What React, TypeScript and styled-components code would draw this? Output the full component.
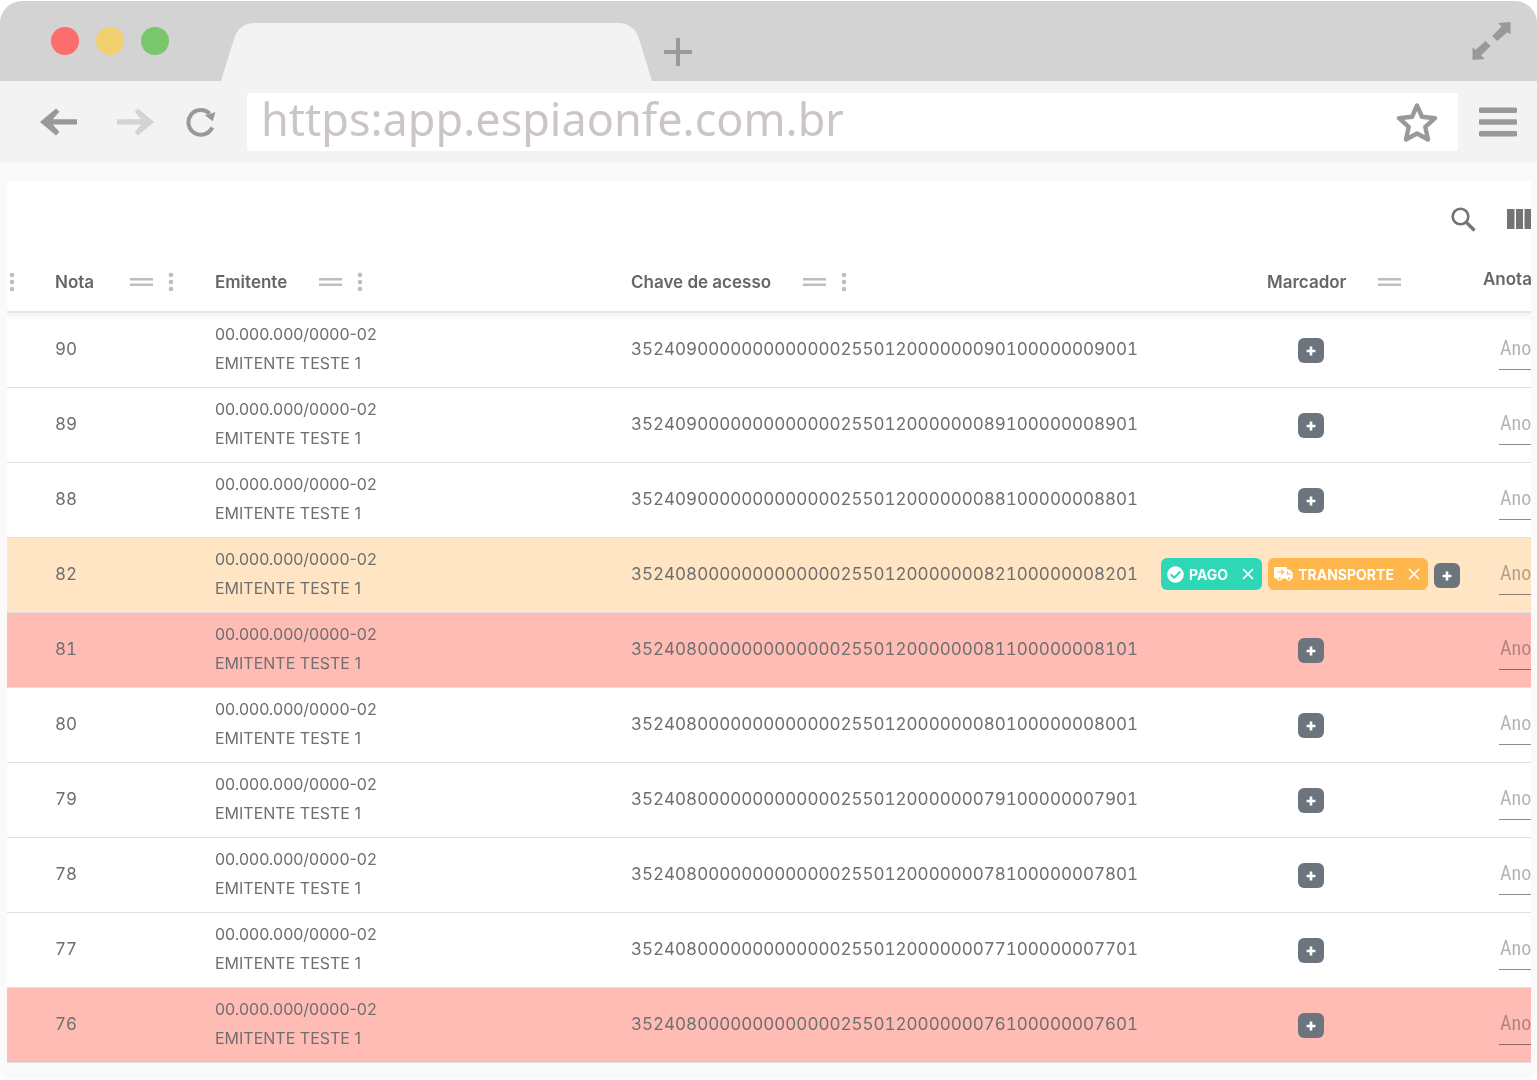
import React from "react";
import styled, { createGlobalStyle } from "styled-components";
import { FaCheckCircle } from "react-icons/fa";

const GlobalStyle = createGlobalStyle`
  *, *::before, *::after { box-sizing: border-box; }
  body { margin: 0; background: #fff; font-family: Inter, "Open Sans", sans-serif; color: #6f6f6f; }
  button { margin: 0; padding: 0; border: 0; background: none; color: inherit; font: inherit; cursor: pointer; }
  svg { display: block; flex-shrink: 0; }
`;

const BrowserWindow = styled.div`
  margin: 1px 0;
  border-radius: 22px 22px 8px 8px;
  background: #fafafa;
  overflow: hidden;
`;

const TitleBar = styled.header`
  display: flex;
  align-items: flex-end;
  height: 80px;
  background: #d3d3d3;
`;

const Lights = styled.div`
  display: flex;
  align-self: center;
  gap: 17px;
  width: 221px;
  padding-left: 51px;
`;

const Light = styled.button<{ $color: string }>`
  width: 28px;
  height: 28px;
  border-radius: 50%;
  background: ${(p) => p.$color};
`;

const Tab = styled.div`
  display: flex;
  width: 431px;
  height: 58px;
  color: #f3f3f3;
`;

const TabBody = styled.div`
  flex: 1;
  background: currentColor;
`;

const NewTab = styled.button`
  margin: 0 auto 15px 12px;
  color: #999;
`;

const Expand = styled.button`
  align-self: center;
  margin-right: 26px;
  color: #999;
`;

const NavBar = styled.nav`
  display: flex;
  align-items: center;
  height: 82px;
  padding: 0 20px 0 40px;
  background: #f3f3f3;
  color: #999;
`;

const NavButtons = styled.div`
  display: flex;
  align-items: center;
  width: 207px;
`;

const NavButton = styled.button<{ $dim?: boolean; $gap?: number }>`
  color: ${(p) => (p.$dim ? "#d3d3d3" : "#999")};
  margin-right: ${(p) => p.$gap ?? 0}px;
`;

const AddressBar = styled.div`
  display: flex;
  flex: 1;
  align-items: center;
  height: 58px;
  margin-right: 21px;
  padding: 0 20px 0 14px;
  border-radius: 3px;
  background: #fff;
`;

const AddressInput = styled.input`
  flex: 1;
  min-width: 0;
  height: 58px;
  padding: 0 0 8px;
  border: 0;
  outline: 0;
  background: none;
  color: #ccc5c7;
  font: 45px "Noto Sans", sans-serif;
`;

const Panel = styled.main`
  margin: 18px 6px 16px 7px;
  background: #fff;
  overflow: hidden;
`;

const TableTools = styled.div`
  display: flex;
  justify-content: flex-end;
  align-items: center;
  gap: 31px;
  height: 72px;
  padding-top: 4px;
  color: #737373;
`;

const Table = styled.table`
  width: calc(100% + 101px);
  table-layout: fixed;
  border-collapse: separate;
  border-spacing: 0;
`;

const Col = styled.col<{ $width?: number }>`
  width: ${(p) => (p.$width ? `${p.$width}px` : "auto")};
`;

const HeadCell = styled.th<{ $left: number; $raised?: boolean }>`
  height: 60px;
  padding: 0 0 ${(p) => (p.$raised ? 6 : 0)}px ${(p) => p.$left}px;
  border-bottom: 2px solid #e6e6e6;
  color: #666;
  font-size: 17px;
  font-weight: 600;
  line-height: 24px;
  text-align: left;
  white-space: nowrap;
`;

const HeadContent = styled.div`
  display: flex;
  align-items: center;
`;

const HeadLabel = styled.span`
  min-width: 43px;
`;

const HeadTools = styled.span`
  display: flex;
  align-items: center;
  gap: 15px;
  margin-left: 32px;
`;

const HeadButton = styled.button`
  display: block;
  color: #bdbdbd;
`;

const TableBody = styled.tbody`
  & > tr:first-child {
    background: linear-gradient(#f5f5f5, #fff 8px);
  }
`;

const Row = styled.tr<{ $tone?: string }>`
  background: ${(p) => p.$tone ?? "transparent"};
`;

const Cell = styled.td<{ $left?: number; $center?: boolean }>`
  height: 75px;
  padding: 0 0 2px ${(p) => p.$left ?? 0}px;
  border-bottom: 1px solid #e0e0e0;
  font-size: 17px;
  line-height: 24px;
  text-align: ${(p) => (p.$center ? "center" : "left")};
  white-space: nowrap;
`;

const Digits = styled.span`
  font-variant-numeric: tabular-nums;
`;

const Issuer = styled.div`
  font-size: 16px;
  line-height: 29px;
`;

const Markers = styled.div`
  display: flex;
  justify-content: center;
  align-items: center;
  gap: 6px;
`;

const AddMarker = styled.button`
  display: grid;
  place-items: center;
  width: 26px;
  height: 25px;
  margin-top: 3px;
  border-radius: 6px;
  background: #6c757d;
  color: #fff;
`;

const Tag = styled.span<{ $color: string }>`
  display: flex;
  align-items: center;
  height: 32px;
  padding: 0 8px 0 6px;
  border-radius: 6px;
  background: ${(p) => p.$color};
  color: #fff;
  font-size: 14px;
  font-weight: 700;
  line-height: 24px;
`;

const TagText = styled.span`
  padding: 2px 14px 0 5px;
`;

const NoteInput = styled.input`
  display: block;
  width: 120px;
  height: 41px;
  padding: 0 0 1px 1px;
  border: 0;
  border-bottom: 1px solid #8c8c8c;
  outline: 0;
  background: none;
  color: #6f6f6f;
  font: 20px "Roboto Condensed", "Liberation Sans Narrow", "Open Sans Condensed", Roboto, sans-serif;
  mix-blend-mode: multiply;
  &::placeholder { color: #000; opacity: 0.3; }
`;

const Handle = () => (
  <svg width="23" height="10" viewBox="0 0 23 10" fill="currentColor" aria-hidden="true">
    <path d="M0 1h23v2.5H0zM0 6.5h23V9H0z" />
  </svg>
);

const Dots = () => (
  <svg width="6" height="20" viewBox="0 0 6 20" fill="currentColor" aria-hidden="true">
    <circle cx="3" cy="3" r="2.3" />
    <circle cx="3" cy="10" r="2.3" />
    <circle cx="3" cy="17" r="2.3" />
  </svg>
);

const Arrow = ({ flip }: { flip?: boolean }) => (
  <svg width="37" height="28" viewBox="0 0 37 28" fill="currentColor" aria-hidden="true">
    <path
      transform={flip ? "matrix(-1 0 0 1 37 0)" : undefined}
      d="M0 14 16 .6l3.400 3.200-6.600 7.400H37v5.400H12.800l6.600 7.400-3.400 3.400z"
    />
  </svg>
);

const Plus = () => (
  <svg width="10" height="10" viewBox="0 0 10 10" aria-hidden="true">
    <path d="M5 .6v8.800M.6 5h8.800" stroke="currentColor" strokeWidth="2.600" />
  </svg>
);

const Close = () => (
  <svg width="12" height="12" viewBox="0 0 12 12" aria-hidden="true">
    <path d="m1 1 10 10M11 1 1 11" stroke="currentColor" strokeWidth="1.700" />
  </svg>
);

const Truck = () => (
  <svg width="19" height="15" viewBox="0 0 19 15" aria-hidden="true">
    <path
      d="M1.400 0h10.200c.8 0 1.400.6 1.400 1.400V2.600h2.200c.5 0 .9.2 1.200.5l2 2.200c.3.3.4.6.4 1V11.500h-1.200a2.700 2.700 0 0 1-5.300 0H8.300a2.700 2.700 0 0 1-5.300 0H1.400C.6 11.500 0 10.900 0 10.100V1.400C0 .6.600 0 1.400 0z"
      fill="#fff"
    />
    <path d="M3.500 5h5.600M7.200 2.700 9.600 5 7.200 7.300M13.300 4.200v2.800h3.900" fill="none" stroke="#ffb64d" strokeWidth="1.100" />
    <circle cx="5.600" cy="11.400" r="1.100" fill="#ffb64d" />
    <circle cx="15" cy="11.400" r="1.100" fill="#ffb64d" />
  </svg>
);

const TabEdge = ({ flip }: { flip?: boolean }) => (
  <svg width="37" height="58" viewBox="0 0 37 58" fill="currentColor" aria-hidden="true">
    <path transform={flip ? "matrix(-1 0 0 1 37 0)" : undefined} d="M0 58 13 16C16 6 23 0 34 0h3v58z" />
  </svg>
);

type Marker = { label: string; color: string; icon: React.ReactNode };
type Invoice = { nota: number; period: string; tone?: string; markers?: Marker[] };

const RED = "#ffbcb5";
const ORANGE = "#ffe5c4";

const invoices: Invoice[] = [
  { nota: 90, period: "09" },
  { nota: 89, period: "09" },
  { nota: 88, period: "09" },
  {
    nota: 82,
    period: "08",
    tone: ORANGE,
    markers: [
      { label: "PAGO", color: "#2ed8b6", icon: <FaCheckCircle size={17} /> },
      { label: "TRANSPORTE", color: "#ffb64d", icon: <Truck /> },
    ],
  },
  { nota: 81, period: "08", tone: RED },
  { nota: 80, period: "08" },
  { nota: 79, period: "08" },
  { nota: 78, period: "08" },
  { nota: 77, period: "08" },
  { nota: 76, period: "08", tone: RED },
];

const accessKey = ({ nota, period }: Invoice) =>
  ["3524", period, "0".repeat(13), "255012", "0".repeat(7), nota, "1", "0".repeat(7), nota, "01"].join("");

const Heading = ({ label, left, dots = true }: { label: string; left: number; dots?: boolean }) => (
  <HeadCell $left={left} scope="col">
    <HeadContent>
      <HeadLabel>{label}</HeadLabel>
      <HeadTools>
        <HeadButton aria-label={`Mover ${label}`}><Handle /></HeadButton>
        {dots && <HeadButton aria-label={`Opções de ${label}`}><Dots /></HeadButton>}
      </HeadTools>
    </HeadContent>
  </HeadCell>
);

export default function App() {
  return (
    <>
      <GlobalStyle />
      <BrowserWindow>
        <TitleBar>
          <Lights>
            <Light $color="#fc6e6e" aria-label="Fechar" />
            <Light $color="#f2d06f" aria-label="Minimizar" />
            <Light $color="#79c66d" aria-label="Maximizar" />
          </Lights>
          <Tab>
            <TabEdge />
            <TabBody />
            <TabEdge flip />
          </Tab>
          <NewTab aria-label="Nova aba">
            <svg width="28" height="28" viewBox="0 0 28 28">
              <path d="M14 0v28M0 14h28" stroke="currentColor" strokeWidth="4" />
            </svg>
          </NewTab>
          <Expand aria-label="Tela cheia">
            <svg width="39" height="38" viewBox="0 0 39 38" fill="currentColor">
              <path d="M38.500 0v12.500l-3.200-2.200-10.100 8.600-5-5 9.400-9.300L26 .9zM.5 38V25.500l3.200 2.200 9.800-8.600 5 5-9.400 9.300 3.900 3.700z" />
            </svg>
          </Expand>
        </TitleBar>

        <NavBar>
          <NavButtons>
            <NavButton aria-label="Voltar" $gap={40}><Arrow /></NavButton>
            <NavButton aria-label="Avançar" $dim $gap={32}><Arrow flip /></NavButton>
            <NavButton aria-label="Recarregar">
              <svg width="30" height="30" viewBox="0 0 30 30">
                <path d="M26.200 20.400A12.400 12.400 0 1 1 23.600 6.600" fill="none" stroke="currentColor" strokeWidth="4" />
                <path d="m18.600 8 3.600-.6L29.400 5l-2.600 9.200z" fill="currentColor" />
              </svg>
            </NavButton>
          </NavButtons>
          <AddressBar>
            <AddressInput aria-label="Endereço" defaultValue="https:app.espiaonfe.com.br" />
            <NavButton aria-label="Favoritar">
              <svg width="42" height="42" viewBox="0 0 42 42">
                <path
                  d="m21 4.500 5 11.300 13 1.400-9.700 8.700 2.700 12.600L21 32.500l-11 6 2.700-12.600L3 17.200l13-1.400z"
                  fill="none"
                  stroke="currentColor"
                  strokeWidth="4.400"
                  strokeLinejoin="round"
                />
              </svg>
            </NavButton>
          </AddressBar>
          <NavButton aria-label="Menu">
            <svg width="38" height="30" viewBox="0 0 38 30" fill="currentColor">
              <rect y=".5" width="38" height="5.500" rx="1.200" />
              <rect y="12.200" width="38" height="5.500" rx="1.200" />
              <rect y="24" width="38" height="5.500" rx="1.200" />
            </svg>
          </NavButton>
        </NavBar>

        <Panel>
          <TableTools>
            <button aria-label="Pesquisar">
              <svg width="25" height="25" viewBox="0 0 25 25" fill="none" stroke="currentColor">
                <circle cx="9.500" cy="9.500" r="7.800" strokeWidth="2.600" />
                <path d="m15.500 15.500 8 8" strokeWidth="3.200" />
              </svg>
            </button>
            <button aria-label="Colunas">
              <svg width="24" height="20" viewBox="0 0 24 20" fill="currentColor">
                <path d="M0 0h7.500v20H0zM9 0h7v20H9zM17.500 0H25v20h-7.500z" />
              </svg>
            </button>
          </TableTools>
          <Table>
            <colgroup>
              <Col $width={24} />
              <Col $width={160} />
              <Col />
              <Col $width={542} />
              <Col $width={323} />
              <Col $width={160} />
            </colgroup>
            <thead>
              <tr>
                <HeadCell $left={2}>
                  <HeadButton aria-label="Opções"><Dots /></HeadButton>
                </HeadCell>
                <Heading label="Nota" left={24} />
                <Heading label="Emitente" left={24} />
                <Heading label="Chave de acesso" left={24} />
                <Heading label="Marcador" left={118} dots={false} />
                <HeadCell $left={11} $raised scope="col">Anotação</HeadCell>
              </tr>
            </thead>
            <TableBody>
              {invoices.map((inv) => (
                <Row key={inv.nota} $tone={inv.tone}>
                  <Cell />
                  <Cell $left={24}><Digits>{inv.nota}</Digits></Cell>
                  <Cell $left={24}>
                    <Issuer>00.000.000/0000-02</Issuer>
                    <Issuer>EMITENTE TESTE 1</Issuer>
                  </Cell>
                  <Cell $left={24}><Digits>{accessKey(inv)}</Digits></Cell>
                  <Cell $center>
                    <Markers>
                      {inv.markers?.map((m) => (
                        <Tag key={m.label} $color={m.color}>
                          {m.icon}
                          <TagText>{m.label}</TagText>
                          <button aria-label={`Remover ${m.label}`}><Close /></button>
                        </Tag>
                      ))}
                      <AddMarker aria-label="Adicionar marcador"><Plus /></AddMarker>
                    </Markers>
                  </Cell>
                  <Cell $left={27}>
                    <NoteInput placeholder="Anotação" aria-label={`Anotação da nota ${inv.nota}`} />
                  </Cell>
                </Row>
              ))}
            </TableBody>
          </Table>
        </Panel>
      </BrowserWindow>
    </>
  );
}
